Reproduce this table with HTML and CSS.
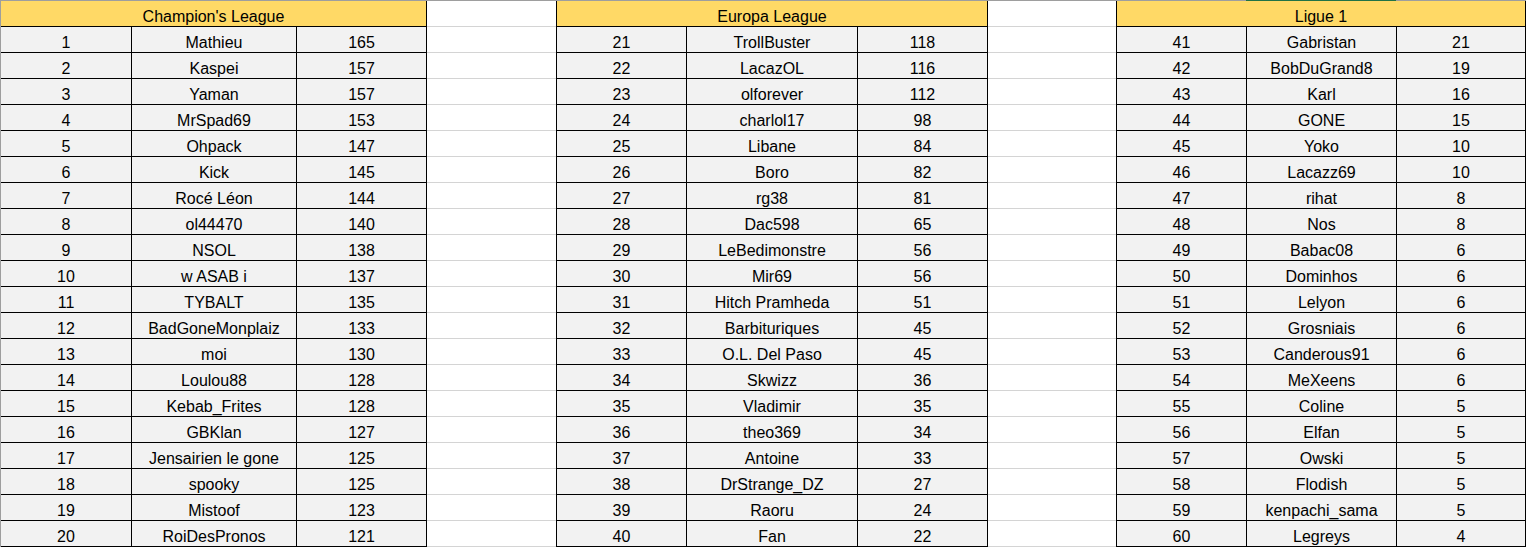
FILE: index.html
```html
<!DOCTYPE html>
<html lang="fr">
<head>
<meta charset="utf-8">
<title>Classement</title>
<link rel="stylesheet" href="styles.css">
</head>
<body>
<div class="sheet">
  <div class="topline"></div>
  <div class="board">
    <section class="league league-cl">
      <div class="league-title">Champion's League</div>
      <div class="cell">1</div><div class="cell">Mathieu</div><div class="cell">165</div>
      <div class="cell">2</div><div class="cell">Kaspei</div><div class="cell">157</div>
      <div class="cell">3</div><div class="cell">Yaman</div><div class="cell">157</div>
      <div class="cell">4</div><div class="cell">MrSpad69</div><div class="cell">153</div>
      <div class="cell">5</div><div class="cell">Ohpack</div><div class="cell">147</div>
      <div class="cell">6</div><div class="cell">Kick</div><div class="cell">145</div>
      <div class="cell">7</div><div class="cell">Rocé Léon</div><div class="cell">144</div>
      <div class="cell">8</div><div class="cell">ol44470</div><div class="cell">140</div>
      <div class="cell">9</div><div class="cell">NSOL</div><div class="cell">138</div>
      <div class="cell">10</div><div class="cell">w ASAB i</div><div class="cell">137</div>
      <div class="cell">11</div><div class="cell">TYBALT</div><div class="cell">135</div>
      <div class="cell">12</div><div class="cell">BadGoneMonplaiz</div><div class="cell">133</div>
      <div class="cell">13</div><div class="cell">moi</div><div class="cell">130</div>
      <div class="cell">14</div><div class="cell">Loulou88</div><div class="cell">128</div>
      <div class="cell">15</div><div class="cell">Kebab_Frites</div><div class="cell">128</div>
      <div class="cell">16</div><div class="cell">GBKlan</div><div class="cell">127</div>
      <div class="cell">17</div><div class="cell">Jensairien le gone</div><div class="cell">125</div>
      <div class="cell">18</div><div class="cell">spooky</div><div class="cell">125</div>
      <div class="cell">19</div><div class="cell">Mistoof</div><div class="cell">123</div>
      <div class="cell">20</div><div class="cell">RoiDesPronos</div><div class="cell">121</div>
    </section>
    <div class="spacer spacer-a"></div>
    <section class="league league-el">
      <div class="league-title">Europa League</div>
      <div class="cell">21</div><div class="cell">TrollBuster</div><div class="cell">118</div>
      <div class="cell">22</div><div class="cell">LacazOL</div><div class="cell">116</div>
      <div class="cell">23</div><div class="cell">olforever</div><div class="cell">112</div>
      <div class="cell">24</div><div class="cell">charlol17</div><div class="cell">98</div>
      <div class="cell">25</div><div class="cell">Libane</div><div class="cell">84</div>
      <div class="cell">26</div><div class="cell">Boro</div><div class="cell">82</div>
      <div class="cell">27</div><div class="cell">rg38</div><div class="cell">81</div>
      <div class="cell">28</div><div class="cell">Dac598</div><div class="cell">65</div>
      <div class="cell">29</div><div class="cell">LeBedimonstre</div><div class="cell">56</div>
      <div class="cell">30</div><div class="cell">Mir69</div><div class="cell">56</div>
      <div class="cell">31</div><div class="cell">Hitch Pramheda</div><div class="cell">51</div>
      <div class="cell">32</div><div class="cell">Barbituriques</div><div class="cell">45</div>
      <div class="cell">33</div><div class="cell">O.L. Del Paso</div><div class="cell">45</div>
      <div class="cell">34</div><div class="cell">Skwizz</div><div class="cell">36</div>
      <div class="cell">35</div><div class="cell">Vladimir</div><div class="cell">35</div>
      <div class="cell">36</div><div class="cell">theo369</div><div class="cell">34</div>
      <div class="cell">37</div><div class="cell">Antoine</div><div class="cell">33</div>
      <div class="cell">38</div><div class="cell">DrStrange_DZ</div><div class="cell">27</div>
      <div class="cell">39</div><div class="cell">Raoru</div><div class="cell">24</div>
      <div class="cell">40</div><div class="cell">Fan</div><div class="cell">22</div>
    </section>
    <div class="spacer spacer-b"></div>
    <section class="league league-l1">
      <div class="league-title">Ligue 1</div>
      <div class="cell">41</div><div class="cell">Gabristan</div><div class="cell">21</div>
      <div class="cell">42</div><div class="cell">BobDuGrand8</div><div class="cell">19</div>
      <div class="cell">43</div><div class="cell">Karl</div><div class="cell">16</div>
      <div class="cell">44</div><div class="cell">GONE</div><div class="cell">15</div>
      <div class="cell">45</div><div class="cell">Yoko</div><div class="cell">10</div>
      <div class="cell">46</div><div class="cell">Lacazz69</div><div class="cell">10</div>
      <div class="cell">47</div><div class="cell">rihat</div><div class="cell">8</div>
      <div class="cell">48</div><div class="cell">Nos</div><div class="cell">8</div>
      <div class="cell">49</div><div class="cell">Babac08</div><div class="cell">6</div>
      <div class="cell">50</div><div class="cell">Dominhos</div><div class="cell">6</div>
      <div class="cell">51</div><div class="cell">Lelyon</div><div class="cell">6</div>
      <div class="cell">52</div><div class="cell">Grosniais</div><div class="cell">6</div>
      <div class="cell">53</div><div class="cell">Canderous91</div><div class="cell">6</div>
      <div class="cell">54</div><div class="cell">MeXeens</div><div class="cell">6</div>
      <div class="cell">55</div><div class="cell">Coline</div><div class="cell">5</div>
      <div class="cell">56</div><div class="cell">Elfan</div><div class="cell">5</div>
      <div class="cell">57</div><div class="cell">Owski</div><div class="cell">5</div>
      <div class="cell">58</div><div class="cell">Flodish</div><div class="cell">5</div>
      <div class="cell">59</div><div class="cell">kenpachi_sama</div><div class="cell">5</div>
      <div class="cell">60</div><div class="cell">Legreys</div><div class="cell">4</div>
    </section>
  </div>
</div>
</body>
</html>
```

FILE: styles.css
```css
html, body {
  margin: 0;
  padding: 0;
  background: #ffffff;
}

body {
  font-family: "Liberation Sans", Arial, sans-serif;
  font-size: 16px;
  color: #000000;
}

.sheet {
  width: 1526px;
}

.topline {
  height: 1px;
  background: linear-gradient(to right,
    #9e9e9e 0, #9e9e9e 1246px,
    #217346 1246px, #217346 1396px,
    #9e9e9e 1396px, #9e9e9e 100%);
}

.board {
  display: flex;
  align-items: stretch;
}

.league {
  display: grid;
  border-left: 1px solid #000000;
}

.league-cl {
  grid-template-columns: 131px 165px 130px;
  border-left-color: #9e9e9e;
}

.league-el {
  grid-template-columns: 130px 171px 130px;
}

.league-l1 {
  grid-template-columns: 130px 150px 129px;
}

.cell,
.league-title {
  box-sizing: border-box;
  height: 26px;
  padding-top: 7px;
  line-height: 18px;
  text-align: center;
  white-space: nowrap;
  overflow: hidden;
  border-right: 1px solid #000000;
  border-bottom: 1px solid #000000;
}

.league-title {
  grid-column: 1 / -1;
  background: #ffd966;
}

.cell {
  background: #f2f2f2;
}

.spacer {
  background: repeating-linear-gradient(to bottom,
    transparent 0, transparent 25px,
    #d4d4d4 25px, #d4d4d4 26px);
}

.spacer-a {
  width: 129px;
}

.spacer-b {
  width: 128px;
}
```
